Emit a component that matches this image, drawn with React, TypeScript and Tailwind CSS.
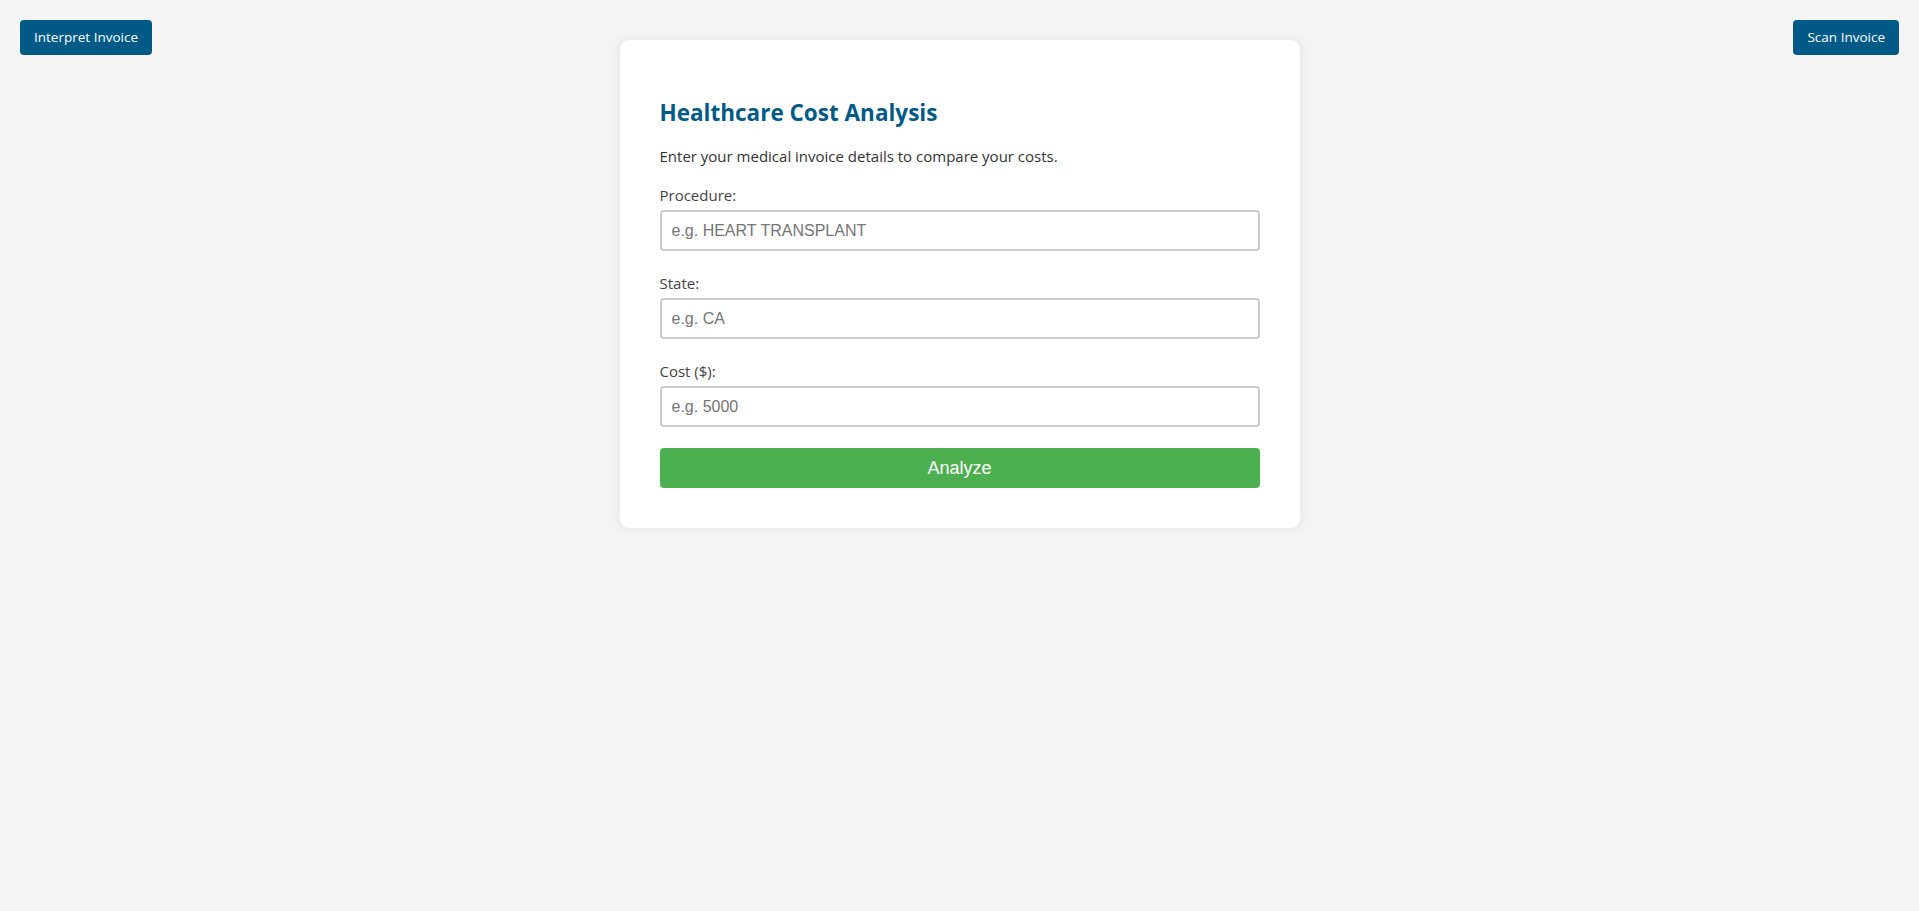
export default function App() {
  const fields = [
    { label: "Procedure:", placeholder: "e.g. HEART TRANSPLANT" },
    { label: "State:", placeholder: "e.g. CA" },
    { label: "Cost ($):", placeholder: "e.g. 5000" },
  ];

  return (
    <div className="min-h-screen bg-[#f4f4f4] font-['Open_Sans',sans-serif]">
      <div className="grid grid-cols-[1fr_680px_1fr] items-start px-[20px] pt-[20px]">
        <button className="justify-self-start h-[35px] rounded-[4px] bg-[#005a87] px-[14px] text-[13.5px] text-white" type="button">
          Interpret Invoice
        </button>

        <div className="mt-[20px] rounded-[9px] bg-white px-[40px] pt-[40px] pb-[40px] shadow-[0_0_10px_rgba(0,0,0,0.08)]">
          <h2 className="mt-[17px] mb-[16px] text-[22.5px] leading-[32px] font-bold text-[#005a87]">Healthcare Cost Analysis</h2>
          <p className="mb-[17px] text-[15px] leading-[22px] text-[#333]">Enter your medical invoice details to compare your costs.</p>
          <form className="grid">
            {fields.map((f) => (
              <div key={f.label} className="mb-[21px]">
                <label className="mb-[4px] block text-[15px] leading-[22px] text-[#444]">{f.label}</label>
                <input
                  className="block h-[41px] w-full rounded-[4px] border-2 border-[#cccccc] px-[10px] font-['Liberation_Sans',Arial,sans-serif] text-[16px] text-[#333] outline-none placeholder:text-[#757575]"
                  placeholder={f.placeholder}
                />
              </div>
            ))}
            <button className="h-[40px] w-full rounded-[4px] bg-[#4caf50] font-['Liberation_Sans',Arial,sans-serif] text-[18px] text-white" type="button">
              Analyze
            </button>
          </form>
        </div>

        <button className="justify-self-end h-[35px] rounded-[4px] bg-[#005a87] px-[14px] text-[13.5px] text-white" type="button">
          Scan Invoice
        </button>
      </div>
    </div>
  );
}
